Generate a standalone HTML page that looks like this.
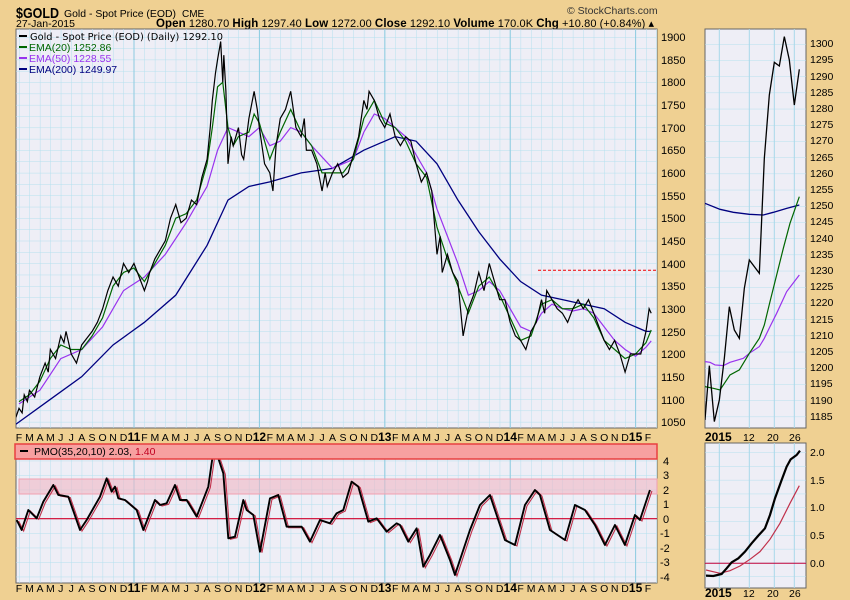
<!DOCTYPE html>
<html><head><meta charset="utf-8"><style>
html,body{margin:0;padding:0;background:#efd092;}
svg{display:block;font-family:"Liberation Sans",sans-serif;}
</style></head><body>
<svg width="850" height="600" viewBox="0 0 850 600" xmlns="http://www.w3.org/2000/svg">
<defs>
<pattern id="gm" patternUnits="userSpaceOnUse" x="19" y="37" width="10.45" height="11.32">
<path d="M0 0V11.32M0 0H10.45" stroke="#b4e0ee" stroke-width="1" fill="none"/></pattern>
<pattern id="gp" patternUnits="userSpaceOnUse" x="19" y="460.7" width="10.45" height="14.5">
<path d="M0 0V14.5M0 0H10.45" stroke="#b4e0ee" stroke-width="1" fill="none"/></pattern>
<pattern id="gr" patternUnits="userSpaceOnUse" x="0" y="44" width="200" height="16.2">
<path d="M0 0H200" stroke="#b4e0ee" stroke-width="1" fill="none"/></pattern>
<pattern id="gr2" patternUnits="userSpaceOnUse" x="0" y="452.3" width="200" height="13.8">
<path d="M0 0H200" stroke="#b4e0ee" stroke-width="1" fill="none"/></pattern>
<clipPath id="cm"><rect x="16" y="29" width="641" height="399"/></clipPath>
<clipPath id="cp"><rect x="16" y="459" width="641" height="124"/></clipPath>
<clipPath id="cr"><rect x="705" y="29" width="101" height="399"/></clipPath>
<clipPath id="cr2"><rect x="705" y="443" width="101" height="145"/></clipPath>
</defs>

<!-- header -->
<text x="16" y="18" font-size="15" font-weight="bold" fill="#000" textLength="43" lengthAdjust="spacingAndGlyphs">$GOLD</text>
<text x="64" y="17" font-size="10.5" fill="#000" textLength="112" lengthAdjust="spacingAndGlyphs">Gold - Spot Price (EOD)</text>
<text x="182" y="17" font-size="10" fill="#000">CME</text>
<text x="16" y="27" font-size="10.5" fill="#000">27-Jan-2015</text>
<text x="156" y="27" font-size="11" fill="#000" textLength="498" lengthAdjust="spacing"><tspan font-weight="bold" font-size="11.5">Open</tspan> 1280.70 <tspan font-weight="bold" font-size="11.5">High</tspan> 1297.40 <tspan font-weight="bold" font-size="11.5">Low</tspan> 1272.00 <tspan font-weight="bold" font-size="11.5">Close</tspan> 1292.10 <tspan font-weight="bold" font-size="11.5">Volume</tspan> 170.0K <tspan font-weight="bold" font-size="11.5">Chg</tspan> +10.80 (+0.84%) ▴</text>
<text x="567" y="14" font-size="10.5" fill="#333">© StockCharts.com</text>

<!-- main panel -->
<rect x="16" y="29" width="641" height="399" fill="#eeeef6" stroke="#666" stroke-width="1"/>
<rect x="16" y="29" width="641" height="399" fill="url(#gm)"/>
<g stroke="#8ccbe0" stroke-width="1">
<line x1="134" y1="29" x2="134" y2="428"/><line x1="259.4" y1="29" x2="259.4" y2="428"/><line x1="384.8" y1="29" x2="384.8" y2="428"/><line x1="510.2" y1="29" x2="510.2" y2="428"/><line x1="635.6" y1="29" x2="635.6" y2="428"/>
</g>
<g clip-path="url(#cm)">
<line x1="538" y1="270.2" x2="657" y2="270.2" stroke="#e00" stroke-dasharray="3,2" stroke-width="1"/>
<g transform="matrix(10.45 0 0 -0.4529 19 897.5)" fill="none">
<polyline vector-effect="non-scaling-stroke" stroke="#000080" stroke-width="1.3" points="-0.3,1045 3,1100 6,1150 9,1220 12,1270 15,1330 18,1440 20,1540 22,1570 24,1580 27,1600 30,1610 33,1650 36,1680 38,1670 40,1620 42,1540 44,1470 46,1410 48,1360 50,1330 52,1320 54,1310 56,1300 58,1270 60,1250 60.5,1250"/>
<polyline vector-effect="non-scaling-stroke" stroke="#9933ee" stroke-width="1.2" points="0,1090 2,1120 4,1190 6,1210 8,1260 10,1340 12,1370 14,1420 16,1490 18,1570 19,1650 20,1700 21,1690 22,1680 23,1700 24,1660 25,1670 26,1700 27,1690 28,1660 30,1610 32,1630 33,1690 34,1730 35,1720 36,1700 37,1680 38,1640 39,1600 40,1520 41,1460 42,1400 43,1330 44,1340 45,1360 46,1340 47,1300 48,1260 49,1250 50,1290 51,1310 52,1300 53,1295 54,1300 55,1290 56,1260 57,1230 58,1210 59,1195 60,1215 60.5,1229"/>
<polyline vector-effect="non-scaling-stroke" stroke="#006600" stroke-width="1.2" points="0,1095 1,1110 2,1140 3,1190 4,1220 5,1210 6,1210 7,1240 8,1280 9,1350 10,1380 11,1390 12,1360 13,1400 14,1440 15,1500 16,1510 17,1540 18,1620 18.5,1700 19,1790 19.5,1800 20,1700 20.5,1660 21,1680 22,1690 22.5,1730 23,1710 24,1630 25,1690 26,1740 27,1690 28,1660 29,1600 30,1600 31,1600 32,1630 33,1720 34,1760 35,1710 36,1700 37,1670 38,1620 39,1590 40,1480 41,1410 42,1350 43,1290 44,1350 45,1370 46,1330 47,1280 48,1230 49,1240 50,1310 51,1320 52,1300 53,1300 54,1310 55,1280 56,1230 57,1210 58,1190 59,1200 60,1225 60.5,1253"/>
<polyline vector-effect="non-scaling-stroke" stroke="#000" stroke-width="1.2" points="-0.3,1060 0,1080 0.3,1070 0.5,1110 0.8,1095 1,1120 1.5,1105 2,1150 2.5,1180 2.8,1160 3,1210 3.5,1190 4,1240 4.3,1225 4.5,1250 5,1200 5.5,1180 6,1220 6.5,1235 7,1250 7.5,1270 8,1300 8.5,1340 9,1370 9.5,1350 10,1400 10.5,1380 11,1400 11.5,1370 12,1340 12.3,1360 12.5,1380 13,1410 13.5,1430 14,1450 14.5,1500 15,1530 15.5,1490 16,1500 16.5,1540 17,1530 17.5,1590 18,1630 18.3,1700 18.5,1760 18.8,1820 19,1850 19.3,1890 19.5,1800 19.6,1860 19.8,1780 20,1620 20.3,1680 20.5,1660 21,1700 21.3,1640 21.5,1630 22,1720 22.5,1780 22.8,1740 23,1700 23.5,1620 24,1600 24.3,1560 24.6,1660 25,1720 25.5,1740 26,1780 26.5,1700 27,1680 27.3,1720 27.5,1650 28,1650 28.5,1620 29,1560 29.3,1600 29.5,1570 30,1600 30.5,1620 31,1590 31.5,1600 32,1640 32.5,1680 33,1760 33.3,1740 33.5,1780 34,1760 34.5,1720 35,1700 35.5,1730 36,1680 36.5,1660 37,1680 37.5,1670 38,1620 38.5,1580 39,1600 39.5,1560 40,1420 40.3,1460 40.5,1380 41,1420 41.5,1380 42,1360 42.5,1240 43,1300 43.5,1330 44,1380 44.5,1340 45,1400 45.5,1360 46,1320 46.5,1320 47,1270 47.5,1240 48,1230 48.5,1210 49,1250 49.5,1270 50,1320 50.3,1290 50.5,1340 51,1320 51.5,1300 52,1290 52.5,1270 53,1300 53.5,1320 54,1300 54.5,1320 55,1290 55.5,1260 56,1230 56.5,1210 57,1230 57.5,1200 58,1160 58.5,1200 59,1200 59.5,1200 60,1250 60.3,1300 60.5,1290"/>
</g>
</g>
<!-- legend -->
<g font-size="10.5">
<rect x="19" y="35" width="8" height="2" fill="#000"/><text x="30" y="40" fill="#000" font-family="DejaVu Sans" font-size="9.8">Gold - Spot Price (EOD) (Daily) 1292.10</text>
<rect x="19" y="46" width="8" height="2" fill="#006600"/><text x="29" y="51" fill="#006600">EMA(20) 1252.86</text>
<rect x="19" y="57" width="8" height="2" fill="#9933ee"/><text x="29" y="62" fill="#9933ee">EMA(50) 1228.55</text>
<rect x="19" y="68" width="8" height="2" fill="#000080"/><text x="29" y="73" fill="#000080">EMA(200) 1249.97</text>
</g>
<!-- main axis -->
<g font-size="11" fill="#000">
<text x="661" y="41">1900</text><text x="661" y="64">1850</text><text x="661" y="86">1800</text><text x="661" y="109">1750</text><text x="661" y="132">1700</text><text x="661" y="154">1650</text><text x="661" y="177">1600</text><text x="661" y="200">1550</text><text x="661" y="222">1500</text><text x="661" y="245">1450</text><text x="661" y="268">1400</text><text x="661" y="290">1350</text><text x="661" y="313">1300</text><text x="661" y="336">1250</text><text x="661" y="358">1200</text><text x="661" y="381">1150</text><text x="661" y="404">1100</text><text x="661" y="426">1050</text>
</g>
<g font-size="10.5" fill="#000" text-anchor="middle" id="months">
<text y="441"><tspan x="19">F</tspan><tspan x="29.5">M</tspan><tspan x="40">A</tspan><tspan x="50.4">M</tspan><tspan x="60.8">J</tspan><tspan x="71.3">J</tspan><tspan x="81.7">A</tspan><tspan x="92">S</tspan><tspan x="102.6">O</tspan><tspan x="113">N</tspan><tspan x="123.5">D</tspan><tspan x="134" font-weight="bold" font-size="12">11</tspan><tspan x="144.4">F</tspan><tspan x="154.9">M</tspan><tspan x="165.3">A</tspan><tspan x="175.8">M</tspan><tspan x="186.2">J</tspan><tspan x="196.7">J</tspan><tspan x="207">A</tspan><tspan x="217.6">S</tspan><tspan x="228">O</tspan><tspan x="238.5">N</tspan><tspan x="248.9">D</tspan><tspan x="259.4" font-weight="bold" font-size="12">12</tspan><tspan x="269.8">F</tspan><tspan x="280.3">M</tspan><tspan x="290.7">A</tspan><tspan x="301.2">M</tspan><tspan x="311.6">J</tspan><tspan x="322">J</tspan><tspan x="332.5">A</tspan><tspan x="343">S</tspan><tspan x="353.4">O</tspan><tspan x="363.9">N</tspan><tspan x="374.3">D</tspan><tspan x="384.8" font-weight="bold" font-size="12">13</tspan><tspan x="395.2">F</tspan><tspan x="405.7">M</tspan><tspan x="416.1">A</tspan><tspan x="426.6">M</tspan><tspan x="437">J</tspan><tspan x="447.5">J</tspan><tspan x="457.9">A</tspan><tspan x="468.4">S</tspan><tspan x="478.8">O</tspan><tspan x="489.3">N</tspan><tspan x="499.7">D</tspan><tspan x="510.2" font-weight="bold" font-size="12">14</tspan><tspan x="520.6">F</tspan><tspan x="531.1">M</tspan><tspan x="541.5">A</tspan><tspan x="552">M</tspan><tspan x="562.4">J</tspan><tspan x="572.9">J</tspan><tspan x="583.3">A</tspan><tspan x="593.8">S</tspan><tspan x="604.2">O</tspan><tspan x="614.7">N</tspan><tspan x="625.1">D</tspan><tspan x="635.6" font-weight="bold" font-size="12">15</tspan><tspan x="648">F</tspan></text>
</g>
<use href="#months" transform="translate(0,151)"/>

<!-- PMO panel -->
<rect x="16" y="444" width="641" height="139" fill="#eeeef6" stroke="#666" stroke-width="1"/>
<rect x="16" y="444" width="641" height="139" fill="url(#gp)"/>
<g stroke="#8ccbe0" stroke-width="1">
<line x1="134" y1="444" x2="134" y2="583"/><line x1="259.4" y1="444" x2="259.4" y2="583"/><line x1="384.8" y1="444" x2="384.8" y2="583"/><line x1="510.2" y1="444" x2="510.2" y2="583"/><line x1="635.6" y1="444" x2="635.6" y2="583"/>
</g>
<rect x="19" y="479" width="638" height="15" fill="#f0b8c4" fill-opacity="0.6" stroke="#f0a0b0" stroke-width="1"/>
<g clip-path="url(#cp)">
<line x1="16" y1="518.7" x2="657" y2="518.7" stroke="#d0002a" stroke-width="1.2"/>
<g transform="matrix(0.3333 0 0 0.3333 2 421)" fill="none">
<polyline vector-effect="non-scaling-stroke" stroke="#c0304a" stroke-width="1.1" points="50,300 65,330 85,270 110,295 130,245 160,195 175,225 205,230 240,330 260,300 300,230 320,175 335,215 345,200 355,235 375,240 410,270 430,330 465,240 480,255 500,250 525,195 540,240 560,240 590,290 625,200 640,95 655,115 670,160 685,355 705,350 730,240 740,270 760,285 780,395 810,235 835,225 860,320 905,320 930,365 960,300 990,310 1010,280 1030,270 1055,185 1075,200 1105,305 1130,295 1160,335 1190,310 1200,315 1225,365 1250,325 1270,440 1290,405 1320,345 1350,420 1365,465 1410,330 1440,255 1470,225 1485,270 1515,360 1545,375 1575,255 1605,210 1620,225 1650,330 1695,360 1725,255 1755,270 1785,315 1815,375 1845,315 1860,345 1875,375 1905,285 1920,300 1935,255 1950,210"/>
</g>
<g transform="matrix(0.3333 0 0 0.3333 0 420)" fill="none">
<polyline vector-effect="non-scaling-stroke" stroke="#000" stroke-width="1.9" stroke-linejoin="round" points="50,300 65,330 85,270 110,295 130,245 160,195 175,225 205,230 240,330 260,300 300,230 320,175 335,215 345,200 355,235 375,240 410,270 430,330 465,240 480,255 500,250 525,195 540,240 560,240 590,290 625,200 640,95 655,115 670,160 685,355 705,350 730,240 740,270 760,285 780,395 810,235 835,225 860,320 905,320 930,365 960,300 990,310 1010,280 1030,270 1055,185 1075,200 1105,305 1130,295 1160,335 1190,310 1200,315 1225,365 1250,325 1270,440 1290,405 1320,345 1350,420 1365,465 1410,330 1440,255 1470,225 1485,270 1515,360 1545,375 1575,255 1605,210 1620,225 1650,330 1695,360 1725,255 1755,270 1785,315 1815,375 1845,315 1860,345 1875,375 1905,285 1920,300 1935,255 1950,210"/>
</g>
</g>
<rect x="15" y="444" width="642" height="15" fill="#f7a0a0" stroke="#e84040" stroke-width="1.5"/>
<text x="34" y="455" font-size="10.5" fill="#000">PMO(35,20,10) 2.03, <tspan fill="#c00020">1.40</tspan></text>
<rect x="20" y="450" width="8" height="2" fill="#000"/>
<g font-size="11" fill="#000">
<text x="663" y="465">4</text><text x="663" y="479">3</text><text x="663" y="494">2</text><text x="663" y="508">1</text><text x="663" y="523">0</text><text x="660" y="537">-1</text><text x="660" y="552">-2</text><text x="660" y="566">-3</text><text x="660" y="581">-4</text>
</g>

<!-- right top panel -->
<rect x="705" y="29" width="101" height="399" fill="#eeeef6" stroke="#666" stroke-width="1"/>
<rect x="705" y="29" width="101" height="399" fill="url(#gr)"/>
<g stroke="#a8d8ea" stroke-width="1"><line x1="719.3" y1="29" x2="719.3" y2="428"/><line x1="749.3" y1="29" x2="749.3" y2="428"/><line x1="774.3" y1="29" x2="774.3" y2="428"/><line x1="794.3" y1="29" x2="794.3" y2="428"/></g>
<g clip-path="url(#cr)"><g transform="matrix(0.3333 0 0 0.3333 700 25)" fill="none">
<polyline vector-effect="non-scaling-stroke" stroke="#000080" stroke-width="1.3" points="15,535 60,553 100,562 148,568 190,570 220,562 260,550 298,540"/>
<polyline vector-effect="non-scaling-stroke" stroke="#9933ee" stroke-width="1.2" points="15,1010 30,1012 45,1020 70,1022 90,1012 130,1000 148,985 178,965 193,940 210,905 230,865 260,800 298,750"/>
<polyline vector-effect="non-scaling-stroke" stroke="#006600" stroke-width="1.2" points="15,1085 40,1090 60,1095 90,1050 118,1035 148,985 178,940 193,900 210,830 230,750 250,670 270,595 298,515"/>
<polyline vector-effect="non-scaling-stroke" stroke="#000" stroke-width="1.3" points="15,1185 28,1022 43,1190 58,1125 73,1000 88,845 103,915 118,940 133,790 148,705 178,745 193,400 208,210 223,112 238,123 253,35 268,105 283,240 298,133"/>
</g></g>
<g font-size="10.5" fill="#000">
<text x="810" y="47">1300</text><text x="810" y="63">1295</text><text x="810" y="80">1290</text><text x="810" y="96">1285</text><text x="810" y="112">1280</text><text x="810" y="128">1275</text><text x="810" y="144">1270</text><text x="810" y="161">1265</text><text x="810" y="177">1260</text><text x="810" y="193">1255</text><text x="810" y="209">1250</text><text x="810" y="225">1245</text><text x="810" y="242">1240</text><text x="810" y="258">1235</text><text x="810" y="274">1230</text><text x="810" y="290">1225</text><text x="810" y="306">1220</text><text x="810" y="323">1215</text><text x="810" y="339">1210</text><text x="810" y="355">1205</text><text x="810" y="371">1200</text><text x="810" y="387">1195</text><text x="810" y="404">1190</text><text x="810" y="420">1185</text>
</g>
<g font-size="10.5" fill="#000"><text x="705" y="441" font-weight="bold" font-size="12">2015</text><text x="743" y="441">12</text><text x="767" y="441">20</text><text x="789" y="441">26</text></g>
<g font-size="10.5" fill="#000"><text x="705" y="597" font-weight="bold" font-size="12">2015</text><text x="743" y="597">12</text><text x="767" y="597">20</text><text x="789" y="597">26</text></g>

<!-- right bottom panel -->
<rect x="705" y="443" width="101" height="145" fill="#eeeef6" stroke="#666" stroke-width="1"/>
<rect x="705" y="443" width="101" height="145" fill="url(#gr2)"/>
<g stroke="#a8d8ea" stroke-width="1"><line x1="719.3" y1="443" x2="719.3" y2="588"/><line x1="749.3" y1="443" x2="749.3" y2="588"/><line x1="774.3" y1="443" x2="774.3" y2="588"/><line x1="794.3" y1="443" x2="794.3" y2="588"/></g>
<g clip-path="url(#cr2)">
<line x1="705" y1="563.3" x2="806" y2="563.3" stroke="#c0003a" stroke-width="1"/>
<g transform="matrix(0.3333 0 0 0.3333 600 400)" fill="none">
<polyline vector-effect="non-scaling-stroke" stroke="#c0304a" stroke-width="1.2" points="318,510 360,520 390,512 420,498 450,478 480,455 510,418 540,370 570,310 598,257"/>
<polyline vector-effect="non-scaling-stroke" stroke="#000" stroke-width="2.2" points="318,527 340,528 365,522 380,505 395,487 415,475 435,455 455,430 475,407 495,385 510,345 525,295 545,240 560,200 572,178 590,165 600,152"/>
</g></g>
<g font-size="10.5" fill="#000"><text x="810" y="456">2.0</text><text x="810" y="484">1.5</text><text x="810" y="511">1.0</text><text x="810" y="539">0.5</text><text x="810" y="567">0.0</text></g>
</svg>
</body></html>
